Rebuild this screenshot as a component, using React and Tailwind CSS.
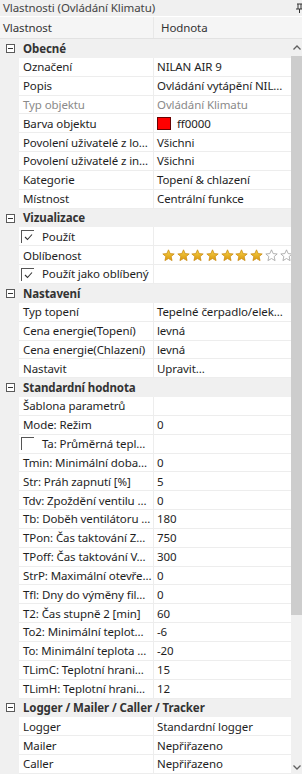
import React from "react";

const Star = ({ filled }) => (
  <svg width="13" height="13" viewBox="0 0 24 24" className="shrink-0">
    <defs>
      <linearGradient id="sg" x1="0" y1="0" x2="0" y2="1">
        <stop offset="0" stopColor="#f7d44a" />
        <stop offset="1" stopColor="#d9960c" />
      </linearGradient>
    </defs>
    <path
      d="M12 1.5l3.1 7 7.4.6-5.6 4.9 1.7 7.4L12 17.6 5.4 21.4l1.7-7.4L1.5 9.1l7.4-.6z"
      fill={filled ? "url(#sg)" : "#ffffff"}
      stroke={filled ? "#c98a10" : "#9a9a9a"}
      strokeWidth="1.4"
      strokeLinejoin="round"
    />
  </svg>
);

const Minus = () => (
  <div className="w-[9px] h-[9px] border border-[#5a5a5a] flex items-center justify-center bg-white">
    <div className="w-[5px] h-px bg-[#333]" />
  </div>
);

const Check = ({ checked }) => (
  <div className="w-[13px] h-[13px] border-t border-l border-[#555] flex items-center justify-center shrink-0">
    {checked && (
      <svg width="9" height="8" viewBox="0 0 9 8">
        <path d="M1 4l2.5 2.5L8 1.5" fill="none" stroke="#333" strokeWidth="1.1" />
      </svg>
    )}
  </div>
);

const Section = ({ title }) => (
  <div className="h-[19px] flex items-center bg-[#f0f0f0]">
    <div className="w-[19px] flex items-center justify-center pl-[1px]">
      <Minus />
    </div>
    <span className="pl-[4px] font-bold text-[#333]">{title}</span>
  </div>
);

const Row = ({ name, value, gray, children, check }) => (
  <div className="h-[19px] flex bg-[#f0f0f0]">
    <div className="w-[19px] shrink-0" />
    <div className="flex-1 flex bg-white border-b border-[#ededed] min-w-0">
      <div className="w-[135px] shrink-0 flex items-center border-r border-[#ededed] overflow-hidden whitespace-nowrap">
        {check !== undefined ? (
          <div className="flex items-center pl-[2px]">
            <Check checked={check} />
            <span className="pl-[8px]">{name}</span>
          </div>
        ) : (
          <span className={"pl-[4px] " + (gray ? "text-[#8a8a8a]" : "")}>{name}</span>
        )}
      </div>
      <div className="flex-1 min-w-0 flex items-center overflow-hidden whitespace-nowrap pl-[3px]">
        {children ? children : <span className={gray ? "text-[#8a8a8a]" : ""}>{value}</span>}
      </div>
    </div>
  </div>
);

export default function App() {
  return (
    <div
      className="w-[302px] h-[774px] overflow-hidden bg-white text-[11.5px] tracking-[-0.1px] text-[#1e1e1e] flex flex-col"
      style={{ fontFamily: '"Noto Sans", "Open Sans", sans-serif' }}
    >
      <div className="h-[17px] shrink-0 bg-[#f0f0f0] flex items-center justify-between pl-[3px] border-b border-white leading-none">
        <span className="text-[#444]">Vlastnosti (Ovládání Klimatu)</span>
        <svg width="8" height="10" viewBox="0 0 8 10" className="mr-[-2px]">
          <path d="M1 1h5M2 1v5M5 1v5M0 6h8M3.5 6v4" stroke="#333" strokeWidth="1" fill="none" />
        </svg>
      </div>
      <div className="h-[22px] shrink-0 bg-[#f5f5f5] border-b border-[#e2e2e2] flex items-center text-[#333]">
        <div className="w-[154px] pl-[3px] h-full flex items-center border-r border-[#e8e8e8]">Vlastnost</div>
        <div className="pl-[7px]">Hodnota</div>
      </div>
      <div className="flex flex-1 min-h-0">
        <div className="w-[291px] shrink-0 flex flex-col">
          <Section title="Obecné" />
          <Row name="Označení" value="NILAN AIR 9" />
          <Row name="Popis" value="Ovládání vytápění NIL..." />
          <Row name="Typ objektu" value="Ovládání Klimatu" gray />
          <Row name="Barva objektu">
            <div className="flex items-center">
              <div className="w-[14px] h-[13px] bg-[#ff0000] border border-[#6a0000]" />
              <span className="pl-[6px]">ff0000</span>
            </div>
          </Row>
          <Row name="Povolení uživatelé z lo..." value="Všichni" />
          <Row name="Povolení uživatelé z in..." value="Všichni" />
          <Row name="Kategorie" value="Topení & chlazení" />
          <Row name="Místnost" value="Centrální funkce" />
          <Section title="Vizualizace" />
          <Row name="Použít" check={true} value="" />
          <Row name="Oblíbenost">
            <div className="flex items-center gap-[1.7px] pl-[5px]">
              {[1, 1, 1, 1, 1, 1, 1, 0, 0].map((f, i) => (
                <Star key={i} filled={!!f} />
              ))}
            </div>
          </Row>
          <Row name="Použít jako oblíbený" check={true} value="" />
          <Section title="Nastavení" />
          <Row name="Typ topení" value="Tepelné čerpadlo/elek..." />
          <Row name="Cena energie(Topení)" value="levná" />
          <Row name="Cena energie(Chlazení)" value="levná" />
          <Row name="Nastavit" value="Upravit..." />
          <Section title="Standardní hodnota" />
          <Row name="Šablona parametrů" value="" />
          <Row name="Mode: Režim" value="0" />
          <Row name="Ta: Průměrná tepl..." check={false} value="" />
          <Row name="Tmin: Minimální doba..." value="0" />
          <Row name="Str: Práh zapnutí [%]" value="5" />
          <Row name="Tdv: Zpoždění ventilu ..." value="0" />
          <Row name="Tb: Doběh ventilátoru ..." value="180" />
          <Row name="TPon: Čas taktování Z..." value="750" />
          <Row name="TPoff: Čas taktování V..." value="300" />
          <Row name="StrP: Maximální otevře..." value="0" />
          <Row name="Tfl: Dny do výměny fil..." value="0" />
          <Row name="T2: Čas stupně 2 [min]" value="60" />
          <Row name="To2: Minimální teplot..." value="-6" />
          <Row name="To: Minimální teplota ..." value="-20" />
          <Row name="TLimC: Teplotní hrani..." value="15" />
          <Row name="TLimH: Teplotní hrani..." value="12" />
          <Section title="Logger / Mailer / Caller / Tracker" />
          <Row name="Logger" value="Standardní logger" />
          <Row name="Mailer" value="Nepřiřazeno" />
          <Row name="Caller" value="Nepřiřazeno" />
        </div>
        <div className="w-[11px] shrink-0 bg-[#f0f0f0] flex flex-col items-center">
          <div className="h-[17px] w-full flex items-center justify-center">
            <svg width="8" height="5" viewBox="0 0 8 5">
              <path d="M0.5 4.5L4 1l3.5 3.5" fill="none" stroke="#606060" strokeWidth="1.3" />
            </svg>
          </div>
          <div className="w-full h-[559px] bg-[#cdcdcd]" />
          <div className="flex-1" />
          <div className="h-[14px] w-full flex items-center justify-center">
            <svg width="8" height="5" viewBox="0 0 8 5">
              <path d="M0.5 0.5L4 4l3.5-3.5" fill="none" stroke="#606060" strokeWidth="1.3" />
            </svg>
          </div>
        </div>
      </div>
    </div>
  );
}
